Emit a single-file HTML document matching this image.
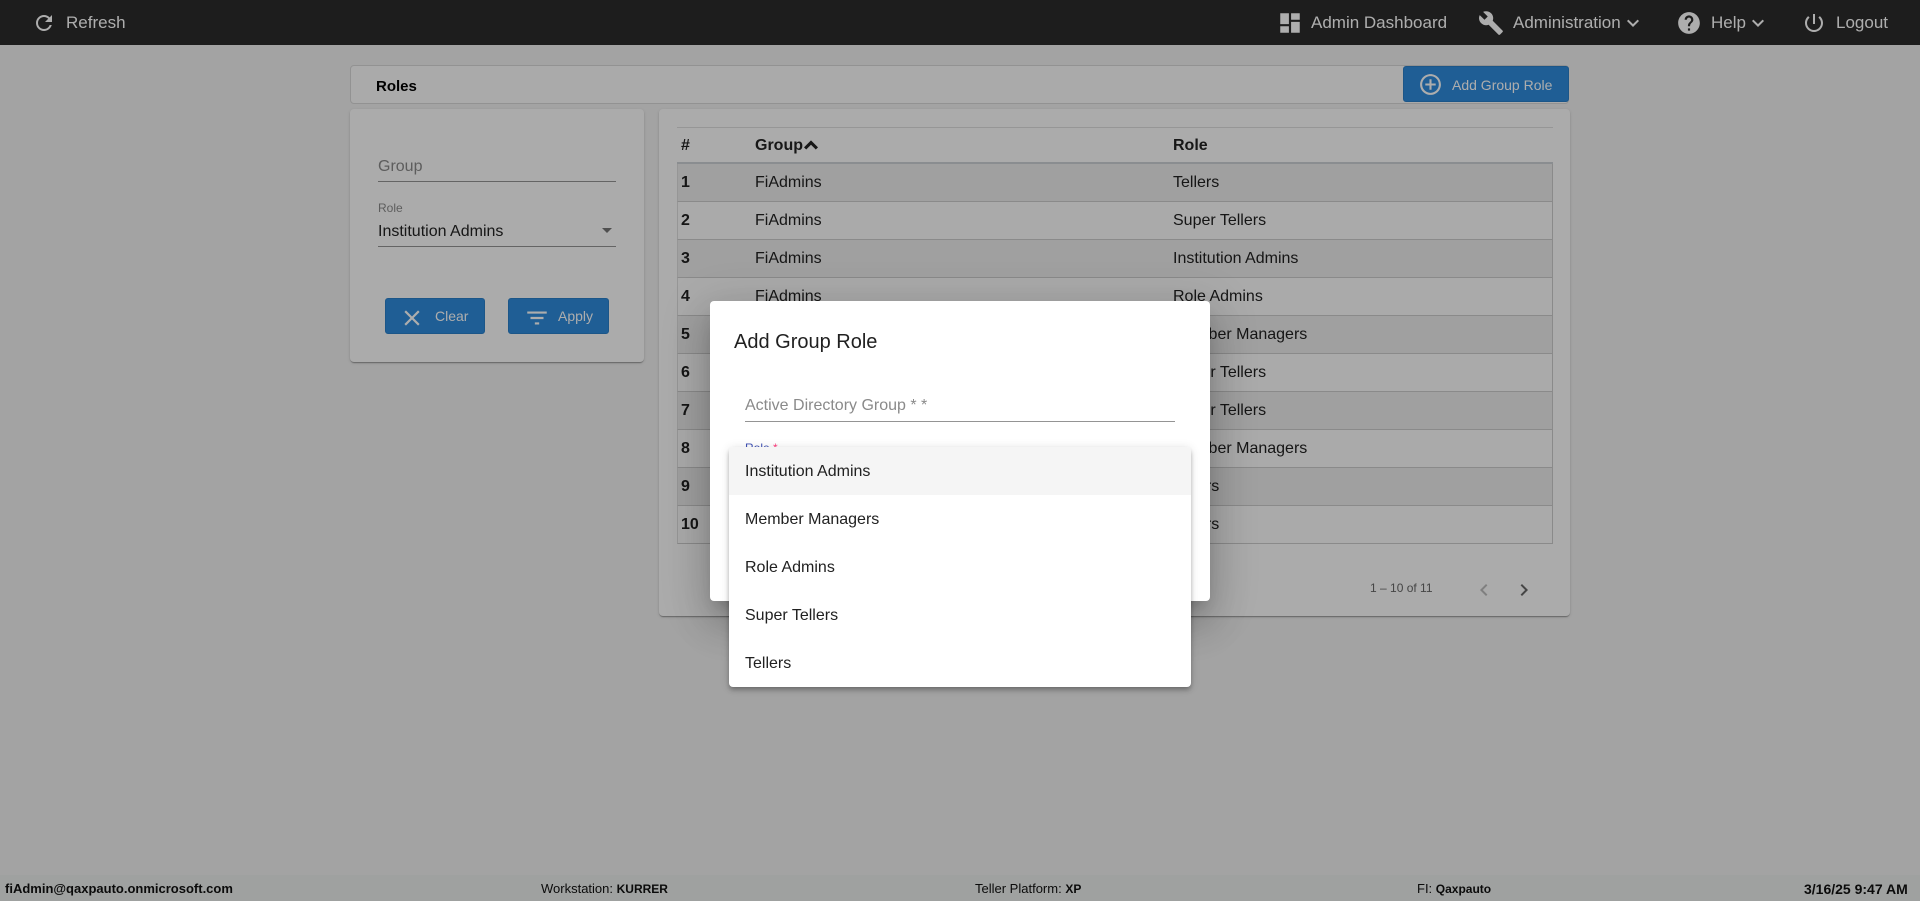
<!DOCTYPE html>
<html lang="en">
<head>
<meta charset="utf-8">
<title>Roles</title>
<style>
*{box-sizing:border-box}
html,body{margin:0;padding:0;width:1920px;height:901px;overflow:hidden;background:#f0f0f0;font-family:"Liberation Sans",Arial,sans-serif;color:#222}
.a{position:absolute;white-space:nowrap}
.t{position:absolute;white-space:nowrap;line-height:20px;height:20px}
svg{position:absolute;display:block}
#top{position:absolute;left:0;top:0;width:1920px;height:45px;background:#2c2c2c}
#top .t{color:#fff;font-size:17px;top:13px}
#top svg{fill:#fff}
.card{position:absolute;background:#fdfdfd;border-radius:4px;box-shadow:0 2px 1px -1px rgba(0,0,0,.2),0 1px 1px rgba(0,0,0,.14),0 1px 3px rgba(0,0,0,.12)}
.btn{position:absolute;background:#2e8bdc;border-radius:3px;border:1px solid #2a7fc9;color:#fff;font-size:14px}
.btn svg{fill:#fff}
.btn .t{color:#fff;font-size:14px}
.row{position:absolute;left:677px;width:876px;height:38px;border-bottom:1px solid #ccc;border-left:1px solid #ddd;border-right:1px solid #ccc}
.row.o{background:#ececec}
.row.e{background:#fbfbfb}
.row .t{font-size:16px;top:9px;color:#212121}
.row .n{left:3px;font-weight:bold}
.row .g{left:77px}
.row .r{left:495px}
#foot{position:absolute;left:0;top:875px;width:1920px;height:26px;background:#ebeeec;font-size:13px;color:#111}
#foot .t{top:4px;font-size:13px}
#foot b{font-size:12px}
#ov{position:absolute;left:0;top:0;width:1920px;height:901px;background:rgba(0,0,0,.32)}
#modal{position:absolute;left:710px;top:301px;width:500px;height:300px;background:#fff;border-radius:4px;box-shadow:0 11px 15px -7px rgba(0,0,0,.2),0 24px 38px 3px rgba(0,0,0,.14),0 9px 46px 8px rgba(0,0,0,.12)}
#menu{position:absolute;left:729px;top:447px;width:462px;height:240px;background:#fff;border-radius:4px;overflow:hidden;box-shadow:0 2px 4px -1px rgba(0,0,0,.2),0 4px 5px rgba(0,0,0,.14),0 1px 10px rgba(0,0,0,.12)}
#menu div{height:48px;line-height:49px;padding-left:16px;font-size:16px;color:#212121;white-space:nowrap}
</style>
</head>
<body>
<div id="top">
  <svg style="left:32px;top:11px" width="24" height="24" viewBox="0 0 24 24"><path d="M17.65 6.35C16.2 4.9 14.21 4 12 4c-4.42 0-7.99 3.58-7.99 8s3.57 8 7.99 8c3.73 0 6.84-2.55 7.73-6h-2.08c-.82 2.33-3.04 4-5.65 4-3.31 0-6-2.69-6-6s2.69-6 6-6c1.66 0 3.14.69 4.22 1.78L13 11h7V4l-2.35 2.35z"/></svg>
  <div class="t" style="left:66px">Refresh</div>
  <svg style="left:1277px;top:10px" width="26" height="26" viewBox="0 0 24 24"><path d="M3 13h8V3H3v10zm0 8h8v-6H3v6zm10 0h8V11h-8v10zm0-18v6h8V3h-8z"/></svg>
  <div class="t" style="left:1311px">Admin Dashboard</div>
  <svg style="left:1478px;top:10px" width="26" height="26" viewBox="0 0 24 24"><path d="M22.7 19l-9.1-9.1c.9-2.3.4-5-1.5-6.9-2-2-5-2.4-7.4-1.3L9 6 6 9 1.6 4.7C.4 7.1.9 10.1 2.9 12.1c1.9 1.9 4.6 2.4 6.9 1.5l9.1 9.1c.4.4 1 .4 1.4 0l2.3-2.3c.5-.4.5-1.1.1-1.4z"/></svg>
  <div class="t" style="left:1513px">Administration</div>
  <svg style="left:1621px;top:11px" width="24" height="24" viewBox="0 0 24 24"><path d="M16.59 8.59L12 13.17 7.41 8.59 6 10l6 6 6-6z"/></svg>
  <svg style="left:1676px;top:10px" width="26" height="26" viewBox="0 0 24 24"><path d="M12 2C6.48 2 2 6.48 2 12s4.48 10 10 10 10-4.48 10-10S17.52 2 12 2zm1 17h-2v-2h2v2zm2.07-7.75l-.9.92C13.45 12.9 13 13.5 13 15h-2v-.5c0-1.1.45-2.1 1.17-2.83l1.24-1.26c.37-.36.59-.86.59-1.41 0-1.1-.9-2-2-2s-2 .9-2 2H8c0-2.21 1.79-4 4-4s4 1.79 4 4c0 .88-.36 1.68-.93 2.25z"/></svg>
  <div class="t" style="left:1711px">Help</div>
  <svg style="left:1746px;top:11px" width="24" height="24" viewBox="0 0 24 24"><path d="M16.59 8.59L12 13.17 7.41 8.59 6 10l6 6 6-6z"/></svg>
  <svg style="left:1802px;top:10px" width="24" height="26" viewBox="0 0 24 24"><path d="M13 3h-2v10h2V3zm4.83 2.17l-1.42 1.42C17.99 7.86 19 9.81 19 12c0 3.87-3.13 7-7 7s-7-3.13-7-7c0-2.19 1.01-4.14 2.58-5.42L6.17 5.17C4.23 6.82 3 9.26 3 12c0 4.97 4.03 9 9 9s9-4.03 9-9c0-2.74-1.23-5.18-3.17-6.83z"/></svg>
  <div class="t" style="left:1836px">Logout</div>
</div>

<div class="a" style="left:350px;top:65px;width:1219px;height:39px;background:#fbfbfb;border:1px solid #d8d8d8;border-radius:4px"></div>
<div class="t" style="left:376px;top:77px;font-size:15px;font-weight:bold;color:#000">Roles</div>
<div class="btn" style="left:1403px;top:66px;width:166px;height:36px">
  <svg style="left:14px;top:5px" width="25" height="25" viewBox="0 0 24 24"><path d="M13 7h-2v4H7v2h4v4h2v-4h4v-2h-4V7zm-1-5C6.48 2 2 6.48 2 12s4.48 10 10 10 10-4.48 10-10S17.52 2 12 2zm0 18c-4.41 0-8-3.59-8-8s3.59-8 8-8 8 3.59 8 8-3.59 8-8 8z"/></svg>
  <div class="t" style="left:48px;top:8px">Add Group Role</div>
</div>

<div class="card" style="left:350px;top:109px;width:294px;height:253px"></div>
<div class="t" style="left:378px;top:157px;font-size:16px;color:#8a8a8a">Group</div>
<div class="a" style="left:378px;top:181px;width:238px;height:1px;background:#949494"></div>
<div class="t" style="left:378px;top:198px;font-size:12px;color:#8a8a8a">Role</div>
<div class="t" style="left:378px;top:222px;font-size:16px;color:#222">Institution Admins</div>
<div class="a" style="left:602px;top:228px;width:0;height:0;border-left:5px solid transparent;border-right:5px solid transparent;border-top:5px solid #757575"></div>
<div class="a" style="left:378px;top:246px;width:238px;height:1px;background:#949494"></div>

<div class="btn" style="left:385px;top:298px;width:100px;height:36px">
  <svg style="left:13px;top:6px" width="26" height="26" viewBox="0 0 24 24"><path d="M19 6.41L17.59 5 12 10.59 6.41 5 5 6.41 10.59 12 5 17.59 6.41 19 12 13.41 17.59 19 19 17.59 13.41 12z"/></svg>
  <div class="t" style="left:49px;top:7px">Clear</div>
</div>
<div class="btn" style="left:508px;top:298px;width:101px;height:36px">
  <svg style="left:15px;top:6px" width="26" height="26" viewBox="0 0 24 24"><path d="M10 18h4v-2h-4v2zM3 6v2h18V6H3zm3 7h12v-2H6v2z"/></svg>
  <div class="t" style="left:49px;top:7px">Apply</div>
</div>

<div class="card" style="left:659px;top:109px;width:911px;height:507px"></div>
<div class="a" style="left:677px;top:127px;width:876px;height:1px;background:#ddd"></div>
<div class="t" style="left:681px;top:136px;font-size:16px;font-weight:bold;color:#222">#</div>
<div class="t" style="left:755px;top:136px;font-size:16px;font-weight:bold;color:#222">Group</div>
<svg style="left:797px;top:131px;fill:#222" width="28" height="28" viewBox="0 0 24 24"><path d="M12 8l-6 6 1.9 1.9L12 11.8l4.1 4.1L18 14z"/></svg>
<div class="t" style="left:1173px;top:136px;font-size:16px;font-weight:bold;color:#222">Role</div>
<div class="a" style="left:677px;top:162px;width:876px;height:2px;background:#ccd0d4"></div>

<div class="row o" style="top:164px"><div class="t n">1</div><div class="t g">FiAdmins</div><div class="t r">Tellers</div></div>
<div class="row e" style="top:202px"><div class="t n">2</div><div class="t g">FiAdmins</div><div class="t r">Super Tellers</div></div>
<div class="row o" style="top:240px"><div class="t n">3</div><div class="t g">FiAdmins</div><div class="t r">Institution Admins</div></div>
<div class="row e" style="top:278px"><div class="t n">4</div><div class="t g">FiAdmins</div><div class="t r">Role Admins</div></div>
<div class="row o" style="top:316px"><div class="t n">5</div><div class="t g">FiAdmins</div><div class="t r">Member Managers</div></div>
<div class="row e" style="top:354px"><div class="t n">6</div><div class="t g">FiAdmins</div><div class="t r">Super Tellers</div></div>
<div class="row o" style="top:392px"><div class="t n">7</div><div class="t g">FiAdmins</div><div class="t r">Super Tellers</div></div>
<div class="row e" style="top:430px"><div class="t n">8</div><div class="t g">FiAdmins</div><div class="t r">Member Managers</div></div>
<div class="row o" style="top:468px"><div class="t n">9</div><div class="t g">FiAdmins</div><div class="t r">Tellers</div></div>
<div class="row e" style="top:506px;"><div class="t n">10</div><div class="t g">FiAdmins</div><div class="t r">Tellers</div></div>

<div class="t" style="left:1370px;top:578px;font-size:12px;color:#666">1 – 10 of 11</div>
<svg style="left:1472px;top:578px;fill:#bbb" width="24" height="24" viewBox="0 0 24 24"><path d="M15.41 7.41L14 6l-6 6 6 6 1.41-1.41L10.83 12z"/></svg>
<svg style="left:1512px;top:578px;fill:#666" width="24" height="24" viewBox="0 0 24 24"><path d="M10 6L8.59 7.41 13.17 12l-4.58 4.59L10 18l6-6z"/></svg>

<div id="foot">
  <div class="t" style="left:5px;font-weight:bold">fiAdmin@qaxpauto.onmicrosoft.com</div>
  <div class="t" style="left:541px">Workstation: <b>KURRER</b></div>
  <div class="t" style="left:975px">Teller Platform: <b>XP</b></div>
  <div class="t" style="left:1417px">FI: <b>Qaxpauto</b></div>
  <div class="t" style="left:1804px;font-weight:bold;font-size:14px">3/16/25 9:47 AM</div>
</div>

<div id="ov"></div>

<div id="modal"></div>
<div class="t" style="left:734px;top:332px;font-size:20px;color:#212121">Add Group Role</div>
<div class="t" style="left:745px;top:396px;font-size:16px;color:#8a8a8a">Active Directory Group * *</div>
<div class="a" style="left:745px;top:421px;width:430px;height:1px;background:#949494"></div>
<div class="t" style="left:745px;top:438px;font-size:12px;color:#3f51b5">Role <span style="color:#ff4081">*</span></div>

<div id="menu">
  <div style="background:#f5f5f5">Institution Admins</div>
  <div>Member Managers</div>
  <div>Role Admins</div>
  <div>Super Tellers</div>
  <div>Tellers</div>
</div>
</body>
</html>
